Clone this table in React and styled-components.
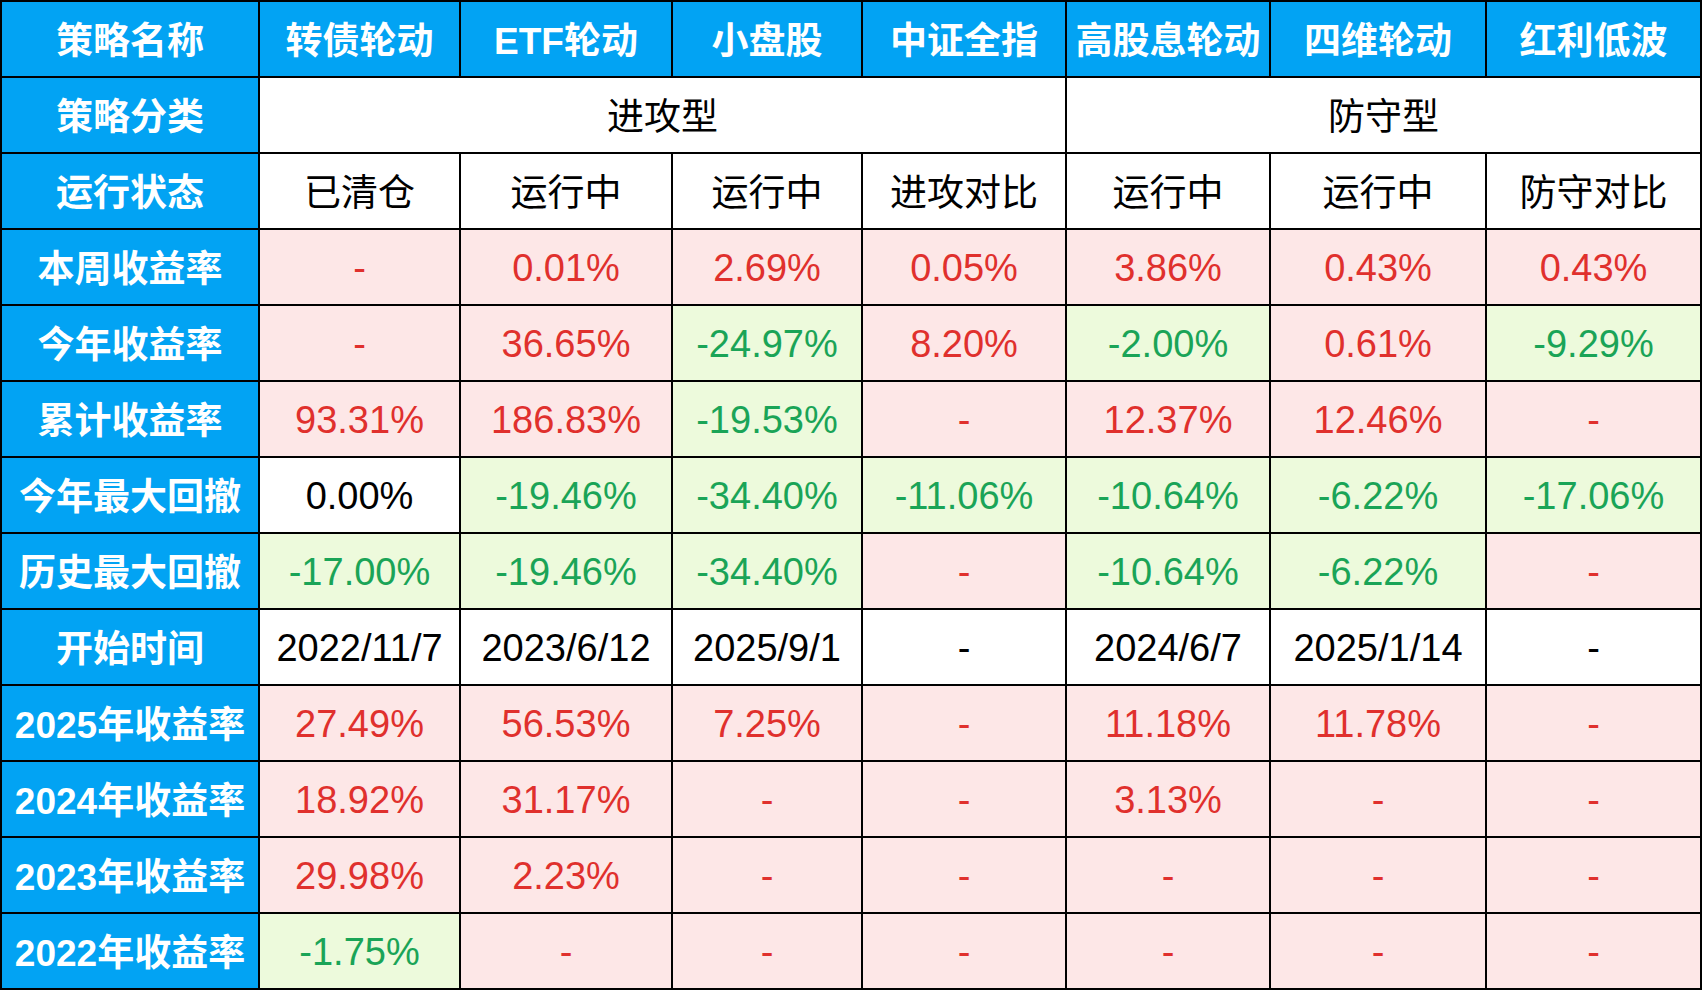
import React from "react";
import styled, { createGlobalStyle } from "styled-components";

const GlobalStyle = createGlobalStyle`
  html, body {
    margin: 0;
    padding: 0;
    background: #ffffff;
  }
  body {
    font-family: "Liberation Sans", "Noto Sans CJK SC", sans-serif;
  }
`;

const columns = ["策略名称", "转债轮动", "ETF轮动", "小盘股", "中证全指", "高股息轮动", "四维轮动", "红利低波"];

// p = 红底红字, g = 绿底绿字, w = 白底黑字
const rows = [
  {
    label: "运行状态",
    cells: [
      ["已清仓", "w"], ["运行中", "w"], ["运行中", "w"], ["进攻对比", "w"],
      ["运行中", "w"], ["运行中", "w"], ["防守对比", "w"],
    ],
  },
  {
    label: "本周收益率",
    cells: [
      ["-", "p"], ["0.01%", "p"], ["2.69%", "p"], ["0.05%", "p"],
      ["3.86%", "p"], ["0.43%", "p"], ["0.43%", "p"],
    ],
  },
  {
    label: "今年收益率",
    cells: [
      ["-", "p"], ["36.65%", "p"], ["-24.97%", "g"], ["8.20%", "p"],
      ["-2.00%", "g"], ["0.61%", "p"], ["-9.29%", "g"],
    ],
  },
  {
    label: "累计收益率",
    cells: [
      ["93.31%", "p"], ["186.83%", "p"], ["-19.53%", "g"], ["-", "p"],
      ["12.37%", "p"], ["12.46%", "p"], ["-", "p"],
    ],
  },
  {
    label: "今年最大回撤",
    cells: [
      ["0.00%", "w"], ["-19.46%", "g"], ["-34.40%", "g"], ["-11.06%", "g"],
      ["-10.64%", "g"], ["-6.22%", "g"], ["-17.06%", "g"],
    ],
  },
  {
    label: "历史最大回撤",
    cells: [
      ["-17.00%", "g"], ["-19.46%", "g"], ["-34.40%", "g"], ["-", "p"],
      ["-10.64%", "g"], ["-6.22%", "g"], ["-", "p"],
    ],
  },
  {
    label: "开始时间",
    cells: [
      ["2022/11/7", "w"], ["2023/6/12", "w"], ["2025/9/1", "w"], ["-", "w"],
      ["2024/6/7", "w"], ["2025/1/14", "w"], ["-", "w"],
    ],
  },
  {
    label: "2025年收益率",
    cells: [
      ["27.49%", "p"], ["56.53%", "p"], ["7.25%", "p"], ["-", "p"],
      ["11.18%", "p"], ["11.78%", "p"], ["-", "p"],
    ],
  },
  {
    label: "2024年收益率",
    cells: [
      ["18.92%", "p"], ["31.17%", "p"], ["-", "p"], ["-", "p"],
      ["3.13%", "p"], ["-", "p"], ["-", "p"],
    ],
  },
  {
    label: "2023年收益率",
    cells: [
      ["29.98%", "p"], ["2.23%", "p"], ["-", "p"], ["-", "p"],
      ["-", "p"], ["-", "p"], ["-", "p"],
    ],
  },
  {
    label: "2022年收益率",
    cells: [
      ["-1.75%", "g"], ["-", "p"], ["-", "p"], ["-", "p"],
      ["-", "p"], ["-", "p"], ["-", "p"],
    ],
  },
];

const tones = {
  head: { bg: "#02a3f3", fg: "#ffffff" },
  w: { bg: "#ffffff", fg: "#000000" },
  p: { bg: "#fde7e7", fg: "#e0302d" },
  g: { bg: "#edfadc", fg: "#1aa457" },
};

// 纯数字/日期的格子字号略大一点
const isNum = (text) => /^[-\d.%/]+$/.test(text);

export default function App() {
  return (
    <>
      <GlobalStyle />
      <Table>
        {columns.map((name) => (
          <Cell key={name} $tone="head">
            {name}
          </Cell>
        ))}

        <Cell $tone="head">策略分类</Cell>
        <Cell $tone="w" $span={4}>
          进攻型
        </Cell>
        <Cell $tone="w" $span={3}>
          防守型
        </Cell>

        {rows.map((row) => (
          <React.Fragment key={row.label}>
            <Cell $tone="head">{row.label}</Cell>
            {row.cells.map(([text, tone], i) => (
              <Cell key={i} $tone={tone} $num={isNum(text)}>
                {text}
              </Cell>
            ))}
          </React.Fragment>
        ))}
      </Table>
    </>
  );
}

const Table = styled.div`
  display: grid;
  grid-template-columns: 256px 199px 210px 188px 202px 202px 214px 213px;
  grid-auto-rows: 74px;
  gap: 2px;
  padding: 2px;
  width: 1702px;
  box-sizing: border-box;
  background-color: #000000;
`;

const Cell = styled.div`
  grid-column: span ${({ $span }) => $span || 1};
  display: flex;
  align-items: center;
  justify-content: center;
  white-space: nowrap;
  font-size: ${({ $num }) => ($num ? "38px" : "37px")};
  padding: ${({ $num }) => ($num ? "2px 0 0" : "0 0 2px")};
  font-weight: ${({ $tone }) => ($tone === "head" ? 700 : 400)};
  background-color: ${({ $tone }) => tones[$tone].bg};
  color: ${({ $tone }) => tones[$tone].fg};
`;
